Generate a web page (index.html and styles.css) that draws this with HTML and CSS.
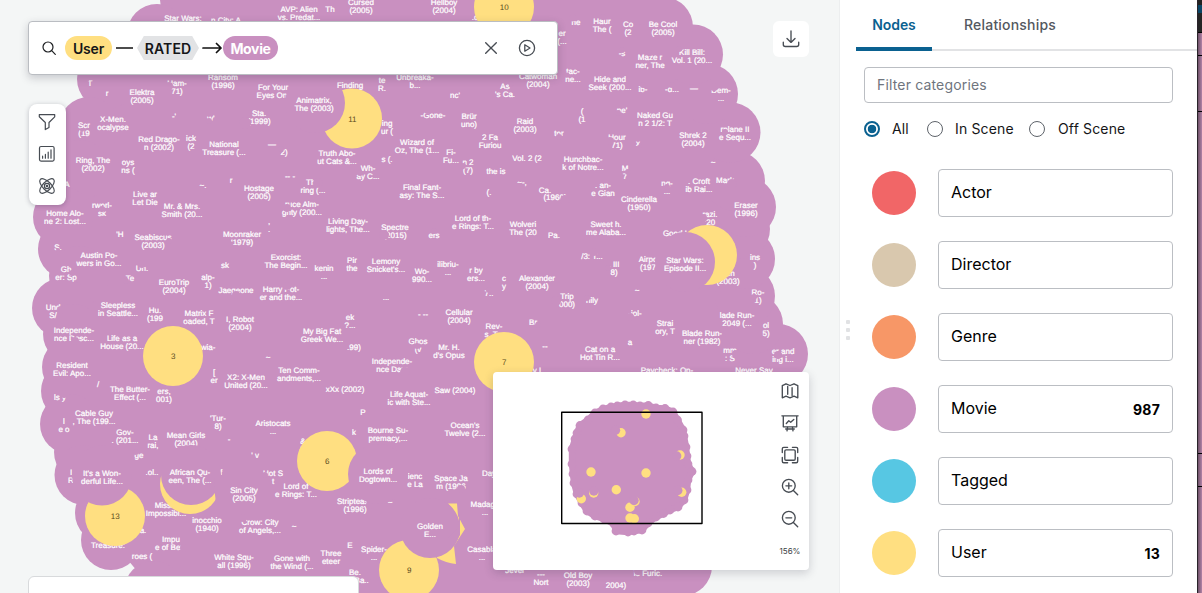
FILE: index.html
```html
<!DOCTYPE html>
<html lang="en">
<head>
<meta charset="utf-8">
<title>Graph explorer</title>
<link rel="stylesheet" href="styles.css">
</head>
<body>
<main class="scene">
  <svg class="graph" id="graph" viewBox="0 0 840 593" width="840" height="593"></svg>

  <section class="search">
    <svg class="search-icon" width="16" height="16" viewBox="0 0 16 16"><circle cx="7" cy="7" r="5"/><path d="M10.7 10.7 14.3 14.3"/></svg>
    <span class="pill user">User</span>
    <svg class="dash" width="17" height="12" viewBox="0 0 17 12"><path d="M0 6H17"/></svg>
    <span class="rel">RATED</span>
    <svg class="arrow" width="20" height="12" viewBox="0 0 20 12"><path d="M1 6H19M14.5 1.5l4.5 4.5-4.5 4.5"/></svg>
    <span class="pill movie">Movie</span>
    <span class="grow"></span>
    <svg class="clear" width="12" height="12" viewBox="0 0 12 12"><path d="M.7.7l10.6 10.6M11.3.7.7 11.3"/></svg>
    <svg class="play" width="18" height="18" viewBox="0 0 18 18"><circle cx="9" cy="9" r="7.6"/><path d="M6.8 5.8v6.4L12 9z"/></svg>
  </section>

  <nav class="tools">
    <svg width="18" height="18" viewBox="0 0 18 18"><path d="M1.3 1.6h15.4v2.2L11 9.5v5L7.3 16.6V9.5L1.3 3.8z"/></svg>
    <svg width="18" height="18" viewBox="0 0 18 18"><rect x="1.5" y="1.5" width="14.6" height="14.6" rx="1.5"/><path d="M4.6 13.2v-2M7.4 13.2V9.4M10.2 13.2V7.2M13 13.2V4.8"/></svg>
    <svg width="18" height="18" viewBox="0 0 18 18"><ellipse cx="9" cy="9" rx="9.4" ry="4.2" transform="rotate(45 9 9)"/><ellipse cx="9" cy="9" rx="9.4" ry="4.2" transform="rotate(-45 9 9)"/><circle cx="9" cy="9" r="2.6"/><circle cx="9" cy="9" r=".7"/></svg>
  </nav>

  <button class="download" aria-label="Download"><svg width="18" height="18" viewBox="0 0 18 18"><path d="M9 1v11.2M5 8.4l4 4 4-4M1.3 12.2v2.3q0 2 2 2h11.4q2 0 2-2v-2.3"/></svg></button>

  <section class="overview">
    <svg class="minimap" id="minimap" viewBox="493 372 278 198" width="278" height="198"></svg>
    <div class="zoombar">
      <svg width="18" height="18" viewBox="0 0 18 18"><path d="M1.3 3.6 5 1.8l4 1.7 4-1.7 3.8 1.8v12.2L13 14.2l-4 1.7-4-1.7-3.7 1.6zM6.7 4.5v7.7M11.1 5.7v7.7"/></svg>
      <svg width="18" height="18" viewBox="0 0 18 18"><path d="M.9 1.8h16.2M2.3 1.8v11h13.4v-11M5.3 9.5l2.5-2.7 1.9 1.4 3.1-2.8M6.6 12.8l-.6 4M11.4 12.8l.6 4M4.7 15h8.6"/></svg>
      <svg width="18" height="18" viewBox="0 0 18 18"><rect x="3.8" y="3.8" width="10.4" height="10.4" rx="1.3"/><path d="M1.3 6.6V2.8q0-1.5 1.5-1.5H6.6M11.4 1.3h3.8q1.5 0 1.5 1.5v3.8M1.3 11.4v3.8q0 1.5 1.5 1.5H6.6M11.4 16.7h3.8q1.5 0 1.5-1.5v-3.8"/></svg>
      <svg width="18" height="18" viewBox="0 0 18 18"><circle cx="7.8" cy="7.8" r="6.4"/><path d="M12.4 12.4l4.3 4.3M4.9 7.8h5.8M7.8 4.9v5.8"/></svg>
      <svg width="18" height="18" viewBox="0 0 18 18"><circle cx="7.8" cy="7.8" r="6.4"/><path d="M12.4 12.4l4.3 4.3M4.9 7.8h5.8"/></svg>
      <span class="percent">156%</span>
    </div>
  </section>
  <section class="sheet"></section>
</main>

<aside class="panel">
  <div class="grip"><i></i><i></i><i></i></div>
  <div class="panel-body">
    <div class="tabs"><span class="tab active">Nodes</span><span class="tab">Relationships</span></div>
    <div class="content">
      <input class="filter" placeholder="Filter categories">
      <div class="radios">
        <span class="radio on"></span><span class="r1">All</span>
        <span class="radio"></span><span class="r2">In Scene</span>
        <span class="radio"></span><span class="r3">Off Scene</span>
      </div>
      <ul class="cats">
        <li><i class="dot actor"></i><div class="cat"><span>Actor</span></div></li>
        <li><i class="dot director"></i><div class="cat"><span>Director</span></div></li>
        <li><i class="dot genre"></i><div class="cat"><span>Genre</span></div></li>
        <li><i class="dot film"></i><div class="cat"><span>Movie</span><b>987</b></div></li>
        <li><i class="dot tagged"></i><div class="cat"><span>Tagged</span></div></li>
        <li><i class="dot person"></i><div class="cat"><span>User</span><b>13</b></div></li>
      </ul>
    </div>
  </div>
</aside>
<div class="edge"><i class="e0"></i><i class="e1"></i><i class="e2"></i><i class="e3"></i><i class="e4"></i></div>
<script src="graph.js"></script>
</body>
</html>
```
FILE: styles.css
```css
* { box-sizing: border-box; }
body { margin: 0; width: 1202px; height: 593px; display: flex; overflow: hidden; font-family: Inter, "Liberation Sans", sans-serif; font-size: 14px; color: #151517; background: #fff; }
svg { display: block; flex: none; fill: none; stroke: #474c53; stroke-width: 1.35; stroke-linecap: round; stroke-linejoin: round; }
.scene { position: relative; width: 840px; height: 593px; flex: none; overflow: hidden; background: #f4f6f6; border-right: 1px solid #eceeef; }
.graph, .minimap { stroke: none; }
.movie-node { fill: #c990c0; }
.user-node { fill: #ffdf81; }
.label { fill: #fff; font: 8px "Liberation Sans", Arial, sans-serif; text-anchor: middle; stroke: #fff; stroke-width: .24; text-rendering: geometricPrecision; }
.count { fill: #5a4a20; font: 8px "Liberation Sans", Arial, sans-serif; text-anchor: middle; text-rendering: geometricPrecision; }
.viewport { fill: none; stroke: #000; stroke-width: 1.4; }

.search { position: absolute; left: 28px; top: 21px; width: 530px; height: 54px; display: flex; align-items: center; padding: 0 21px 0 12px; background: #fff; border: 1px solid #babdc2; border-radius: 4px; box-shadow: 0 3px 9px rgba(40,40,60,.22); }
.search-icon { stroke: #1d1f22; stroke-width: 1.2; }
.pill { height: 24px; border-radius: 12px; display: grid; place-items: center; font-weight: 700; font-size: 14px; }
.user { width: 47px; margin-left: 8px; background: #ffdf81; font-weight: 600; letter-spacing: -.2px; }
.movie { width: 55px; margin-left: 1px; background: #c990c0; color: #fff; letter-spacing: -.35px; }
.dash, .arrow { stroke: #111; stroke-width: 1.7; }
.dash { margin-left: 4px; }
.arrow { margin-left: 3px; }
.rel { width: 62px; height: 24px; margin-left: 4px; display: grid; place-items: center; background: #e2e3e5; font-weight: 600; letter-spacing: .1px; clip-path: polygon(11% 0, 89% 0, 100% 50%, 89% 100%, 11% 100%, 0 50%); }
.grow { flex: 1; }
.clear { margin-right: 21px; }
.play { stroke-width: 1.3; }

.tools { position: absolute; left: 29px; top: 104px; width: 37px; height: 101px; padding: 9px 0 9px 9px; display: flex; flex-direction: column; align-items: flex-start; gap: 14px; background: #fff; border-radius: 8px; box-shadow: 0 1px 5px rgba(40,40,60,.28); }
.tools svg { stroke-width: 1.2; }
.download { position: absolute; left: 773px; top: 21px; width: 36px; height: 36px; display: grid; place-items: center; padding: 0; border: 0; background: #fff; border-radius: 6px; }
.overview { position: absolute; left: 493px; top: 372px; width: 316px; height: 198px; display: flex; background: #fff; border-radius: 4px; box-shadow: 0 3px 10px rgba(40,40,60,.2); }
.zoombar { width: 38px; display: flex; flex-direction: column; align-items: center; gap: 14px; padding-top: 10px; }
.percent { font-size: 8px; line-height: 12px; margin-top: 3px; color: #3b3f45; }
.sheet { position: absolute; left: 28px; top: 576px; width: 331px; height: 30px; background: #fff; border: 1px solid #d8dadc; border-radius: 6px; }

.panel { width: 357px; height: 593px; display: flex; }
.grip { width: 16px; padding: 320px 0 0 6px; display: flex; flex-direction: column; gap: 4px; }
.grip i { width: 4px; height: 4px; background: #e1e2e4; border-radius: 1px; }
.panel-body { flex: 1; }
.tabs { height: 51px; display: flex; border-bottom: 2px solid #e2e3e5; }
.tab { height: 51px; padding: 0 32px; line-height: 50px; font-weight: 500; letter-spacing: .2px; color: #535860; }
.tab.active { width: 76px; padding: 0; text-align: center; color: #0a6190; border-bottom: 4px solid #0a6190; border-radius: 4px 4px 0 0; font-weight: 600; letter-spacing: -.1px; }
.content { padding: 16px 24px 0 8px; }
.filter { display: block; width: 309px; height: 36px; border: 1px solid #bbbec3; border-radius: 4px; padding: 0 12px 1px; background: #fff; font: 14px Inter, sans-serif; letter-spacing: .16px; }
.filter::placeholder { color: #6f757e; opacity: 1; }
.radios { height: 16px; margin-top: 18px; display: flex; align-items: center; letter-spacing: .15px; line-height: 16px; white-space: nowrap; }
.radio { width: 16px; height: 16px; flex: none; border: 1px solid #5e636a; border-radius: 50%; }
.radio.on { border: 2px solid #0a6190; background: radial-gradient(circle, #0a6190 4px, #fff 4.6px); }
.r1 { width: 47px; padding-left: 12px; }
.r2 { width: 86px; padding-left: 12px; }
.r3 { padding-left: 13px; }
.cats { list-style: none; margin: 32px 0 0; padding: 0; display: flex; flex-direction: column; gap: 24px; }
.cats li { height: 48px; display: flex; align-items: center; padding-left: 8px; }
.dot { width: 44px; height: 44px; border-radius: 50%; margin-right: 22px; }
.cat { width: 235px; height: 48px; padding: 0 12px 2px; display: flex; justify-content: space-between; align-items: center; border: 1px solid #bbbec3; border-radius: 4px; font-size: 16px; letter-spacing: 0; color: #000; }
.cat b { font-size: 14px; letter-spacing: .2px; padding-top: 2px; }
.actor { background: #f16667; }
.director { background: #d9c8ae; }
.genre { background: #f79767; }
.film { background: #c990c0; }
.tagged { background: #57c7e3; }
.person { background: #ffdf81; }

.edge { width: 5px; display: flex; flex-direction: column; gap: 1px; background: #000; border-left: 1px solid #29232a; }
.edge i { background: linear-gradient(90deg, #6f5269, #b283a8); }
.edge .e0 { height: 32px; background: linear-gradient(#222 5px, #0b4565 5px, #0b4565 13px, #252525 13px); }
.edge .e1 { height: 22px; }
.edge .e2 { height: 55px; }
.edge .e3 { height: 341px; }
.edge .e4 { height: 32px; }
.edge::after { content: ""; flex: 1; background: linear-gradient(90deg, #6f5269, #b283a8); }
```
FILE: graph.js
```js
const NS = 'http://www.w3.org/2000/svg';
function add(parent, tag, attrs, text) {
  const el = document.createElementNS(NS, tag);
  for (const k in attrs) el.setAttribute(k, attrs[k]);
  if (text) el.textContent = text;
  parent.appendChild(el);
  return el;
}
const graph = document.getElementById('graph');
const disc = (x, y, r = 30, cls = 'movie-node', parent = graph) => add(parent, 'circle', { cx: x, cy: y, r, class: cls });

// Outer ring of movie nodes, counter-clockwise from the top left.
const ring = [[190,-1],[157,34],[107,79],[89,127],[80,170],[63,217],[68,249],[79,276],[62,308],[73,334],[72,367],[71,391],[70,424],[84,452],[84.5,475],[105,513],[111,540],[154,591],[665,600],[682,566],[730,450],[778,354],[753,324],[745,296],[745,259],[740,229],[746,207],[735,181],[730.5,132.5],[708,94],[693,54.5],[663,27],[640,-5]];
add(graph, 'polygon', { class: 'movie-node', points: ring.join(' ') });
ring.forEach(([x, y]) => disc(x, y));

// Labels: centre x, centre y of the first line, the lines, a patch of a node lying over them.
const labels = [
[183,18,'Star Wars:'],[226,20,'n City: A'],[299,9,'AVP: Alien','vs. Predat...'],[330,9,'Th'],[361,2,'Cursed','(2005)'],[444,2,'Hellboy','(2004)'],[475,17,'.d'],[576,22,'ne',0,[573,18,3.5]],[562,33,'er','(...'],
[602,21,'Haur','The (',[603,17,3]],[628,24,'Co','(2'],[663,24,'Be Cool','(2005)'],[622,53,'-s',0,[622,50,3]],[650,57,'Maze r','ner, The',[650,53,3]],[692,52,'Kill Bill:','Vol. 1 (20...',[679,49,3]],
[90,83,'T',0,[87,80,2]],[107,93,'r'],[142,92,'Elektra','(2005)'],[177,83,'Ham-','71)',[169,86,4]],[223,77,'Ransom','(1996)'],[273,87,'For Your','Eyes On!'],[314,100,'Animatrix,','The (2003)'],[415,77,'Unbreaka-','b...'],[382,80,'te','R.',[386,85,2.5]],[505,86,'As',"'s Ca.",[511,84,2.5]],[538,76,'Catwoman','(2004)'],[573,71,'tac-','ne...',[567,75,2.5]],[610,79,'Hide and','Seek (200...'],[643,89,'ib-',0,[643,85,3]],[672,89,'-d...',0,[672,85,3]],[694,88,'—'],[721,90,'Dem-','...',[714,87,4]],
[84,125,'Scr','(19',[82,130,2]],[113,119,'X-Men.','ocalypse'],[159,139,'Red Drago-','n (2002)'],[191,138,'ick','(2'],[224,144,'National','Treasure (...'],[174,116,"-'"],[211,118,"w'",0,[209,121,3]],[259,113,'Sta.','(1999)',[245,123,6]],[93,160,'Ring, The','(2002)'],[128,162,'oys','ns ('],[272,144,'—'],[284,152,'2)',0,[281,149,3]],
[433,115,'-Gone-',0,[428,110,4]],[455,95,"nc'"],[469,116,'Brür','uno)'],[525,121,'Raid','(2003)'],[559,133,'tor',0,[559,137,3]],[387,123,'ing','ur ('],[417,142,'Wizard of','Oz, The (1...'],[490,137,'2 Fa','Furiou'],[451,152,'Fi-','Fu...'],[337,153,'Truth Abo-','ut Cats &...'],[387,159,'s (.'],[368,168,'Wh-','ay C...',[360,173,3]],[468,162,'n 2','(7)',[463,166,3]],[496,171,'the is',0,[496,168,2]],[527,158,'Vol. 2 (2'],[583,159,'Hunchbac-','k of Notre...'],[582,111,'(','(1'],[622,110,"ne'",0,[618,113,3]],[655,115,'Naked Gu','n 2 1/2: T'],[617,137,'Hour','71)',[610,141,4]],[638,143,'x',0,[640,146,2]],[693,135,'Shrek 2','(2004)'],[735,129,'rplane II','e Sequ...',[725,132,3]],[625,168,'M','7',[628,172,3]],[603,185,'. an-','e Gian'],[667,183,'ng-','...',[667,187,3]],[699,181,'. Croft','ib Rai...'],[725,180,'Mark',0,[732,184,5]],[713,162,'~'],
[67,184,'A'],[231,180,'r'],[203,185,'~.'],[290,176,'-- -'],[259,188,'Hostage','(2005)'],[313,182,'The','ring (...',[318,183,5]],[422,187,'Final Fant-','asy: The S...'],[489,192,'(.'],[522,182,'~-,'],[545,190,'Ca.'],[555,197,'(1960)',0,[565,200,5]],[639,199,'Cinderella','(1950)'],
[145,194,'Live ar','Let Die'],[102,205,'rworl-',' sk',[102,209,3]],[182,206,'Mr. & Mrs.','Smith (20...'],[302,204,'ruce Alm-','ghty (200...',[287,208,4]],[65,213,'Home Alo-','ne 2: Lost...'],[120,234,"'H"],[153,237,'Seabiscus','(2003)',[169,241,3]],[242,234,'Moonraker','‘1979)'],[269,221,',','.'],[99,255,'Austin Po-','wers in Go...'],[58,247,'S.',0,[58,250,2]],[66,269,'Gh','er: Sp',[72,273,3]],[142,268,'Un.',0,[142,264,4]],[130,278,'Te',0,[126,281,3]],[225,265,'sk'],[174,282,'EuroTrip','(2004)'],[208,277,'alp-','1)'],[236,290,'Jaegeone',0,[236,295,4]],[286,257,'Exorcist:','The Begin...'],[281,289,'Harry Pot-','er and the...',[287,286,4]],
[348,221,'Living Day-','lights, The...'],[395,227,'Spectre','(2015)',[384,235,5]],[434,235,'ers',0,[434,231,3]],[473,218,'Lord of th-','e Rings: T...'],[523,224,'Wolveri','The (20'],[554,235,'Pa.'],[352,260,'Pir','the'],[324,268,'kenin','...'],[386,261,'Lemony',"Snicket's..."],[422,271,'Wo-','990...'],[448,264,'ilibriu-','...'],[476,270,'r by','ers...'],[504,278,'c','y'],[537,278,'Alexander','(2004)'],[489,293,'7..',0,[489,290,3]],[386,297,'...'],
[606,224,'Sweet h.','me Alaba...'],[592,256,'/3: T...',0,[594,252,4]],[614,264,', III','8)',[608,268,3]],[648,259,'Airpo','(197'],[746,205,'Eraser','(1996)'],[710,214,'razi.',"'20",[703,218,4]],[676,233,'Good L',0,[684,236,4]],[685,260,'Star Wars:','Episode II...'],[728,273,'een','(2003)'],[755,257,'ins',')'],[758,292,'Ro-','1)',[754,297,3]],[637,290,'~'],[567,296,'Trip','000)',[556,301,5]],[592,300,'nily',0,[587,298,3]],
[53,307,'Und','S/',[61,310,4]],[118,305,'Sleepless','in Seattle...'],[155,310,'Hu.','(199'],[199,313,'Matrix F','oaded, T'],[240,319,'I, Robot','(2004)'],[74,330,'Independe-','nce Desc...',[75,341,4]],[122,338,'Life as a','House (20...',[121,335,3]],[208,347,'wia-'],[72,365,'Resident','Evil: Apo...'],[98,384,'/'],[130,389,'The Butter-','Effect (...'],[60,397,'ls y',0,[64,394,4]],[164,391,'ers,','001)'],[214,372,'[','er'],[246,377,'X2: X-Men','United (20...'],[268,357,'~'],[299,370,'Ten Comm-','andments,...'],
[322,331,'My Big Fat','Greek We...'],[350,317,'ek','?...'],[354,347,'.99)'],[392,361,'Independe-','nce Day:',[405,372,5]],[459,312,'Cellular','(2004)'],[423,314,'- --'],[418,341,'Ghos','(v',[417,346,3]],[449,347,'Mr. H.',"d's Opus"],[494,326,'Rev-','s. T...'],[534,322,'Br.',0,[538,325,3]],[345,389,'xXx (2002)'],[409,394,'Life Aquat-','ic with Ste...'],[455,390,'Saw (2004)'],[545,346,'--'],[538,370,'y L'],
[635,313,'-iol-',0,[630,317,4]],[665,323,'Strai','ory, T'],[737,315,'lade Run-','2049 (...'],[766,325,'ol','5)'],[702,333,'Blade Run-','ner (1982)'],[600,349,'Cat on a','Hot Tin R...'],[630,342,'a'],[730,350,'mm',': S',[736,354,4]],[783,351,'er and','ing i...',[778,355,4]],[667,370,'Paycheck: On-'],[754,370,'Never Say'],
[94,413,'Cable Guy',', The (199...'],[64,421,'l','e o'],[125,432,'Gov-','. (201...'],[153,437,'La','rai,'],[186,435,'Mean Girls','(2004)',[187,450,4]],[139,455,'ge',0,[136,452,3]],[218,418,"'Tur-",'8)'],[229,439,'-'],[273,423,'Aristocats','...'],[71,472,'I','R'],[102,473,"It's a Won-",'derful Life...'],[152,472,'.ol..'],[190,472,'African Qu-','een, The (...'],[221,472,'f'],[273,473,'Hot S','t',[265,475,3]],[255,455,"' v"],[244,490,'Sin City','(2005)'],[166,505,'Missio','Impossibl...'],[207,520,'inocchio','(1940)'],[171,539,'Impu','e of Ben.',[184,548,4]],[143,530,'a.'],[108,545,'Treasure:'],[142,556,'roes ('],[260,522,'Crow: City','of Angels,...',[243,518,4]],[234,557,'White Squ-','all (1996)'],[292,558,'Gone with','the Wind (...'],[294,526,'~'],
[363,412,'P'],[388,430,'Bourne Su-','premacy,...'],[465,425,"Ocean's",'Twelve (2...'],[303,441,'&','B'],[296,486,'Lord of','e Rings: T...'],[378,471,'Lords of','Dogtown...'],[415,476,'ienc','e La'],[451,478,'Space Ja','m (1996',[461,489,4]],[355,501,'Striptease','(1996)',[370,505,4]],[390,502,'~'],[331,553,'Three','eteer'],[350,545,'E'],[374,549,'Spider-','...'],[355,572,'Be.','the Ba..',[369,576,4]],[489,473,'Day'],[485,504,'Madaga','...'],[482,549,'Casabla','...'],[354,432,'k'],
[515,570,'Jever'],[541,574,'---','Nort'],[578,575,'Old Boy','(2003)'],[648,573,'ie Furic.',0,[638,571,4]],[616,585,'2004)']
];
function drawLabel([x, y, a, b, cut]) {
  add(graph, 'text', { x, y: y + 2.8, class: 'label' }, a);
  if (b) add(graph, 'text', { x, y: y + 10.6, class: 'label' }, b);
  if (cut) disc(...cut);
}
const onTop = ['Animatrix,', 'Star Wars:', 'Lords of', "It's a Won-", 'African Qu-', 'Sin City'];
const isTop = l => onTop.includes(l[2]) && l[1] > 50;
labels.filter(l => !isTop(l)).forEach(drawLabel);

// User nodes and the movie nodes that overlap them.
[[504,7,10],[352,118.5,11],[173,356,3],[504,362,7],[327,461,6],[115,516,13],[409,570,9],[707,255],[190,484]].forEach(([x, y, n]) => {
  disc(x, y, 30, 'user-node');
  if (n) add(graph, 'text', { x: x + .3, y: y + 3.4, class: 'count' }, n);
});
add(graph, 'path', { class: 'user-node', d: 'M448 503.5 457 503.5 458 516 465 529 454 546 456 564Q446 563 437 558L430 528 459 526Q457 511 448 503.5Z' });
[[315,103],[685,262],[378,474],[102,475.5],[191,475],[430,528]].forEach(([x, y]) => disc(x, y));
add(graph, 'path', { class: 'movie-node', d: 'M214.5 478Q214 490 216 503L235 503V478ZM459 518 460 518V535L454 546 448 538 458 528Z' });
labels.filter(isTop).forEach(drawLabel);
drawLabel([350,85,'Finding']);
drawLabel([430,526,'Golden','E...']);

// Overview of the whole graph, with the visible area framed.
const mini = document.getElementById('minimap');
const rim = [[617.3,406],[625,405],[633.3,405],[640,406],[648.3,405.5],[656,408],[665,408.5],[673,412],[677.5,420],[683,430],[684,436],[686,447],[687,456],[688,464],[692,471.5],[688,480],[687,490],[684,500],[678,507],[670,510],[663.5,513.5],[656,517],[648,523],[642,530],[634,531],[628,532],[616,531],[614,524],[604,519],[595,516],[587,511],[582,503],[577,494],[574,483],[573,474],[572,464],[572,449],[575,439],[577,433],[580,425.5],[588,420],[595,413],[603,409],[611,407]];
add(mini, 'polygon', { class: 'movie-node', points: rim.join(' '), stroke: '#c990c0', 'stroke-width': 6.4 });
rim.forEach(([x, y]) => disc(x, y, 4.4, 'movie-node', mini));
[[646,414],[621,432.7],[680,455],[591,472],[646,473],[616.3,489.7],[581.3,498.7],[593.7,493],[681.7,492.3],[635,501.5],[630,507.3],[630,518],[634.3,518.8]].forEach(([x, y]) => disc(x, y, 4.7, 'user-node', mini));
[[615.5,430.3],[676.7,456],[579.3,493],[593.9,491],[677.8,490.5],[634,500.5]].forEach(([x, y]) => disc(x, y, 4.7, 'movie-node', mini));
add(mini, 'rect', { class: 'viewport', x: 561.7, y: 412.2, width: 140.3, height: 111.3 });
```
